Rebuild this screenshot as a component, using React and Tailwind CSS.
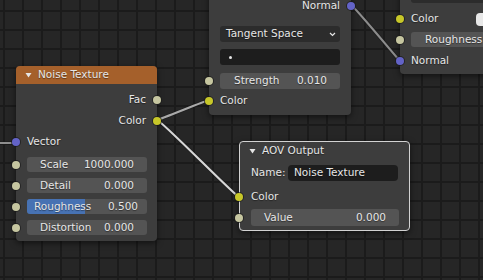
const Socket = ({ color, side = 'left' }) => (
  <span
    className={`absolute top-1/2 -translate-y-1/2 w-[8px] h-[8px] rounded-full ring-1 ring-[#1a1a1a]/70 ${
      side === 'left' ? 'left-[-4px]' : 'right-[-4px]'
    }`}
    style={{ backgroundColor: color }}
  />
);

const KHAKI = '#c6c6a0';
const YELLOW = '#c7c729';
const BLUE = '#6363c7';

const Triangle = ({ className = '' }) => (
  <svg width="7" height="6" viewBox="0 0 7 6" className={className}>
    <path d="M0.5 1 L6.5 1 L3.5 5.5 Z" fill="#e6e6e6" />
  </svg>
);

const NumField = ({ label, value, pl = 'pl-[13px]', pr = 'pr-[13px]', h = 'h-[15px]', fill }) => (
  <div className={`relative ${h} rounded-[3px] bg-[#545454] overflow-hidden`}>
    {fill && <div className="absolute left-0 top-0 bottom-0 bg-[#4772b3]" style={{ width: fill }} />}
    <div className={`relative h-full flex items-center justify-between ${pl} ${pr}`}>
      <span>{label}</span>
      <span>{value}</span>
    </div>
  </div>
);

const Link = ({ d, color }) => (
  <>
    <path d={d} stroke="#1a1a1a" strokeWidth="4" opacity="0.45" />
    <path d={d} stroke={color} strokeWidth="2.2" />
  </>
);

const Links = () => (
  <svg className="absolute inset-0" width="483" height="280">
    <g fill="none" strokeLinecap="round">
      <Link d="M0 143 L16 143" color="#8e8e8e" />
      <Link d="M157 120 C161 119, 205 101, 209 100" color="#aaaaaa" />
      <Link d="M157 120 C162 121, 234 195, 239 197" color="#d6d6d6" />
      <Link d="M351 5 C354 6, 397 58, 400 61" color="#8c8c8c" />
    </g>
  </svg>
);

const NoiseNode = () => (
  <div className="absolute left-[16px] top-[66px] w-[141px] h-[175px] rounded-[4px] bg-[#3d3d3d] shadow-[0_2px_6px_rgba(0,0,0,0.55)] flex flex-col">
    <div className="h-[18px] rounded-t-[4px] bg-[#a5602b] flex items-center pl-[9px] gap-[6px]">
      <Triangle />
      <span>Noise Texture</span>
    </div>
    <div className="flex flex-col pt-[5px] pb-[5px]">
      <div className="relative h-[21px] flex items-center justify-end pr-[11px]">
        Fac
        <Socket color={KHAKI} side="right" />
      </div>
      <div className="relative h-[21px] flex items-center justify-end pr-[11px]">
        Color
        <Socket color={YELLOW} side="right" />
      </div>
      <div className="relative h-[22px] flex items-center pl-[11px]">
        Vector
        <Socket color={BLUE} />
      </div>
      <div className="mt-[4px] flex flex-col gap-[6px]">
        <div className="relative pl-[11px] pr-[10px]">
          <NumField label="Scale" value="1000.000" />
          <Socket color={KHAKI} />
        </div>
        <div className="relative pl-[11px] pr-[10px]">
          <NumField label="Detail" value="0.000" />
          <Socket color={KHAKI} />
        </div>
        <div className="relative pl-[11px] pr-[10px]">
          <NumField label="Roughness" value="0.500" pl="pl-[7px]" pr="pr-[9px]" fill="58px" />
          <Socket color={KHAKI} />
        </div>
        <div className="relative pl-[11px] pr-[10px]">
          <NumField label="Distortion" value="0.000" />
          <Socket color={KHAKI} />
        </div>
      </div>
    </div>
  </div>
);

const NormalMapNode = () => (
  <div className="absolute left-[209px] top-[-12px] w-[142px] rounded-[4px] bg-[#3d3d3d] shadow-[0_2px_6px_rgba(0,0,0,0.55)] flex flex-col pt-[8px] pb-[4px]">
    <div className="relative h-[19px] flex items-center justify-end pr-[11px] leading-none">
      Normal
      <Socket color={BLUE} side="right" />
    </div>
    <div className="mt-[11px] mx-[11px] h-[16px] rounded-[3px] bg-[#2c2c2c] flex items-center justify-between pl-[6px] pr-[4px]">
      <span>Tangent Space</span>
      <svg width="7" height="5" viewBox="0 0 7 5">
        <path d="M1 1 L3.5 3.5 L6 1" stroke="#e6e6e6" strokeWidth="1.2" fill="none" />
      </svg>
    </div>
    <div className="mt-[7px] mx-[11px] h-[16px] rounded-[3px] bg-[#1d1d1d] flex items-center pl-[9px]">
      <span className="w-[3px] h-[3px] rounded-full bg-[#e6e6e6]" />
    </div>
    <div className="relative mt-[8px] px-[11px]">
      <NumField label="Strength" value="0.010" pl="pl-[14px]" pr="pr-[13px]" h="h-[16px]" />
      <Socket color={KHAKI} />
    </div>
    <div className="relative mt-[1px] h-[21px] flex items-center pl-[11px]">
      Color
      <Socket color={YELLOW} />
    </div>
  </div>
);

const PrincipledNode = () => (
  <div className="absolute left-[400px] top-[-20px] w-[150px] rounded-[4px] bg-[#3d3d3d] shadow-[0_2px_6px_rgba(0,0,0,0.55)] flex flex-col pt-[7px] pb-[2px]">
    <div className="mx-[11px] h-[16px] rounded-[3px] bg-[#2c2c2c]" />
    <div className="relative mt-[5px] h-[22px] flex items-center pl-[11px]">
      <span className="w-[65px]">Color</span>
      <span className="h-[13px] flex-1 rounded-l-[4px] bg-[#e8e8e8]" />
      <Socket color={YELLOW} />
    </div>
    <div className="relative mt-[2px] pl-[11px]">
      <div className="h-[15px] rounded-[3px] bg-[#545454] flex items-center pl-[14px]">Roughness</div>
      <Socket color={KHAKI} />
    </div>
    <div className="relative mt-[3px] h-[22px] flex items-center pl-[11px]">
      Normal
      <Socket color={BLUE} />
    </div>
  </div>
);

const AovNode = () => (
  <div className="absolute left-[239px] top-[141px] w-[171px] h-[90px] rounded-[4px] border border-[#d2d2d2] bg-[#3d3d3d] shadow-[0_2px_6px_rgba(0,0,0,0.55)] flex flex-col">
    <div className="h-[18px] flex items-center pl-[9px] gap-[6px]">
      <Triangle />
      <span>AOV Output</span>
    </div>
    <div className="mt-[5px] h-[16px] flex items-center pl-[11px] pr-[11px]">
      <span className="w-[37px]">Name:</span>
      <div className="flex-1 h-full rounded-[4px] bg-[#1d1d1d] flex items-center pl-[6px]">Noise Texture</div>
    </div>
    <div className="relative mt-[5px] h-[21px] flex items-center pl-[11px]">
      Color
      <span className="absolute top-1/2 -translate-y-1/2 left-[-5px] w-[8px] h-[8px] rounded-full ring-1 ring-[#1a1a1a]/70 bg-[#c7c729]" />
    </div>
    <div className="relative mt-[2px] pl-[11px] pr-[10px]">
      <NumField label="Value" value="0.000" h="h-[17px]" />
      <span className="absolute top-1/2 -translate-y-1/2 left-[-5px] w-[8px] h-[8px] rounded-full ring-1 ring-[#1a1a1a]/70 bg-[#c6c6a0]" />
    </div>
  </div>
);

export default function App() {
  return (
    <div className="relative w-[483px] h-[280px] overflow-hidden bg-[#262626] bg-[linear-gradient(to_right,#1b1b1b_2px,transparent_2px),linear-gradient(to_bottom,#1b1b1b_2px,transparent_2px)] bg-[size:19px_19px] bg-[position:3px_10px] font-['DejaVu_Sans',sans-serif] text-[10.5px] text-[#e6e6e6] [text-shadow:0_1px_1px_rgba(0,0,0,0.45)]">
      <Links />
      <NoiseNode />
      <NormalMapNode />
      <PrincipledNode />
      <AovNode />
    </div>
  );
}
